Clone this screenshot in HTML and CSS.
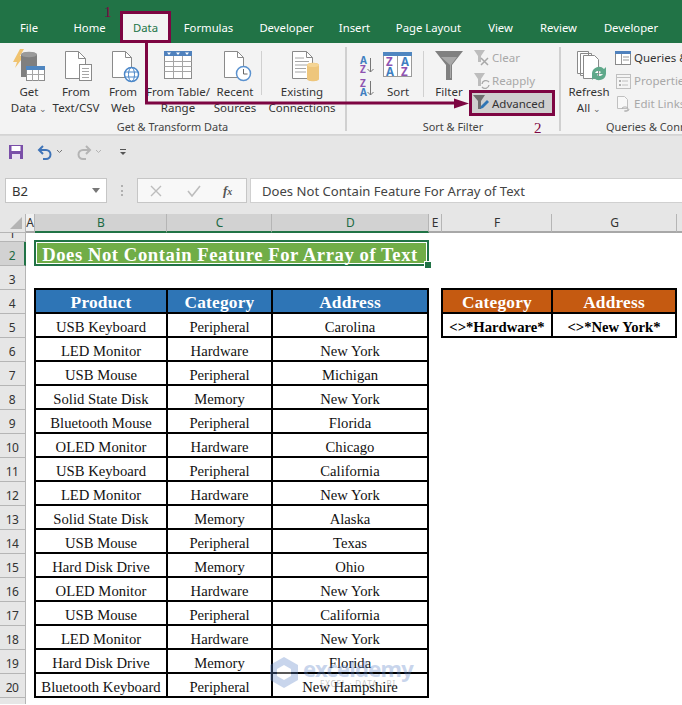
FILE: index.html
```html
<!DOCTYPE html>
<html lang="en">
<head>
<meta charset="utf-8">
<title>Does Not Contain Feature For Array of Text</title>
<link rel="stylesheet" href="styles.css">
</head>
<body>
<div class="app">
  <nav class="tabs">
    <div class="tab">File</div><div class="tab">Home</div><div class="tab tab-data">Data</div><div class="tab">Formulas</div><div class="tab">Developer</div><div class="tab">Insert</div><div class="tab">Page Layout</div><div class="tab">View</div><div class="tab">Review</div><div class="tab">Developer</div>
  </nav>

  <section class="ribbon">
    <div class="group g-get">
      <div class="group-body">
        <div class="big b-get">
          <svg class="ico" width="48" height="36" viewBox="5 47 48 36"><path d="M13 62 20 49h4l-4 7h4l-9 12 2-6z" fill="#f0c36f"/><path d="M21 55c0-4 16-4 16 0v22H21z" fill="#7f7f7f"/><ellipse cx="29" cy="54.500" rx="8" ry="2.800" fill="#9a9a9a"/><rect x="26.500" y="66.500" width="18" height="14" fill="#fff" stroke="#8c8c8c"/><rect x="26" y="66" width="19" height="4" fill="#4f86c0"/><path d="M26.500 74.500h18M32.500 70v11M38.500 70v11" stroke="#a6a6a6" fill="none"/></svg>
          <span>Get</span><span>Data <i class="chev">⌄</i></span>
        </div>
        <div class="big b-text">
          <svg class="ico" width="46" height="36" viewBox="53 47 46 36"><path d="M65.500 51.500h13l7 7v20h-20z" fill="#fff" stroke="#8a8a8a"/><path d="M78.500 51.500v7h7" fill="none" stroke="#8a8a8a"/><rect x="79.500" y="64.500" width="12" height="16" fill="#fff" stroke="#8a8a8a"/><path d="M82 68.500h7M82 71.500h7M82 74.500h7M82 77.500h7" stroke="#a6a6a6"/></svg>
          <span>From</span><span>Text/CSV</span>
        </div>
        <div class="big b-web">
          <svg class="ico" width="48" height="36" viewBox="99 47 48 36"><path d="M112.500 51.500h13l6 6v20h-19z" fill="#fff" stroke="#8a8a8a"/><path d="M125.500 51.500v6h6" fill="none" stroke="#8a8a8a"/><circle cx="131.500" cy="74.500" r="7" fill="#fff" stroke="#4a86c8" stroke-width="1.500"/><ellipse cx="131.500" cy="74.500" rx="3" ry="7" fill="none" stroke="#4a86c8"/><path d="M125 72h13M125 77h13" stroke="#4a86c8"/></svg>
          <span>From</span><span>Web</span>
        </div>
        <div class="big b-table">
          <svg class="ico" width="62" height="36" viewBox="147 47 62 36"><rect x="164.500" y="51.500" width="27" height="27" fill="#fff" stroke="#8c8c8c"/><rect x="164" y="51" width="28" height="5" fill="#4f81bd"/><path d="M167 52.500h4l-2 2.500zM176 52.500h4l-2 2.500zM185 52.500h4l-2 2.500z" fill="#fff"/><path d="M164.500 61.500h27M164.500 66.500h27M164.500 71.500h27M173.500 56v22M182.500 56v22" stroke="#a6a6a6"/></svg>
          <span>From Table/</span><span>Range</span>
        </div>
        <div class="big b-recent">
          <svg class="ico" width="52" height="36" viewBox="209 47 52 36"><path d="M224.500 51.500h13l6 6v20h-19z" fill="#fff" stroke="#8a8a8a"/><path d="M237.500 51.500v6h6" fill="none" stroke="#8a8a8a"/><circle cx="243.500" cy="73.500" r="7" fill="#fff" stroke="#5b92cf" stroke-width="1.500"/><path d="M243.500 69v5h4" fill="none" stroke="#666"/></svg>
          <span>Recent</span><span>Sources</span>
        </div>
        <div class="vsep"></div>
        <div class="big b-exist">
          <svg class="ico" width="78" height="36" viewBox="263 47 78 36"><path d="M292.500 51.500h14l6 6v21h-20z" fill="#fff" stroke="#8a8a8a"/><path d="M306.500 51.500v6h6" fill="none" stroke="#8a8a8a"/><path d="M295 58h9M295 61.500h14M295 65h14M295 68.500h11M295 72h11" stroke="#a6a6a6"/><path d="M307 65c0-3 12-3 12 0v14c0 3-12 3-12 0z" fill="#eec67c"/><ellipse cx="313" cy="65" rx="6" ry="2" fill="#f5d595"/></svg>
          <span>Existing</span><span>Connections</span>
        </div>
      </div>
      <div class="group-label">Get &amp; Transform Data</div>
    </div>

    <div class="gsep"></div>

    <div class="group g-sort">
      <div class="group-body">
        <div class="az-col">
          <svg width="24" height="20" viewBox="0 0 24 20"><text class="az blue" x="4" y="9">A</text><text class="az purple" x="4" y="18">Z</text><path d="M14.500 3v14M11.500 14l3 3 3-3" fill="none" stroke="#777"/></svg>
          <svg width="24" height="20" viewBox="0 0 24 20"><text class="az purple" x="4" y="9">Z</text><text class="az blue" x="4" y="18">A</text><path d="M14.500 3v14M11.500 14l3 3 3-3" fill="none" stroke="#777"/></svg>
        </div>
        <div class="big b-sort">
          <svg class="ico" width="38" height="36" viewBox="379 47 38 36"><rect x="383.500" y="53.500" width="28" height="23" fill="#fff" stroke="#9a9a9a"/><rect x="383" y="52" width="29" height="4" fill="#4f86c0"/><path d="M397.500 56v20" stroke="#9a9a9a"/><text class="az purple big-az" x="386" y="66">Z</text><text class="az blue big-az" x="386" y="76">A</text><text class="az blue big-az" x="401" y="66">A</text><text class="az purple big-az" x="401" y="76">Z</text></svg>
          <span>Sort</span>
        </div>
        <div class="vsep vsep-sort"></div>
        <div class="big b-filter">
          <svg class="ico" width="48" height="36" viewBox="425 47 48 36"><path d="M435 51h28l-11 14v15h-6V65z" fill="#808080"/><path d="M441 57h16l-6 8v13h-1V65z" fill="#a8a8a8"/></svg>
          <span>Filter</span>
        </div>
        <div class="small-col f-col">
          <div class="small muted">
            <svg width="18" height="18" viewBox="0 0 18 18"><path d="M1 1h11L8 7v6H5V7z" fill="#bdbdbd"/><path d="M8 9l7 7M15 9l-7 7" stroke="#a8a8a8" stroke-width="1.500"/></svg>
            <span>Clear</span>
          </div>
          <div class="small muted">
            <svg width="18" height="18" viewBox="0 0 18 18"><path d="M1 1h11L8 7v7H5V7z" fill="#bdbdbd"/><path d="M9 12a4 4 0 0 1 7-2M16 13a4 4 0 0 1-7 2" fill="none" stroke="#a8a8a8" stroke-width="1.300"/></svg>
            <span>Reapply</span>
          </div>
          <div class="small advanced">
            <svg width="18" height="18" viewBox="0 0 18 18"><path d="M0 1h12L8 7v8H5V7z" fill="#6f6f6f"/><path d="M7 15l1-3 6-6 2 2-6 6z" fill="#2f75b5"/></svg>
            <span>Advanced</span>
          </div>
        </div>
      </div>
      <div class="group-label s-label">Sort &amp; Filter</div>
    </div>

    <div class="gsep"></div>

    <div class="group g-query">
      <div class="group-body">
        <div class="big b-refresh">
          <svg class="ico" width="56" height="36" viewBox="561 47 56 36"><path d="M577.500 51.500h11v22h-11zM580.500 53.500h11v22h-11z" fill="#fff" stroke="#8a8a8a"/><path d="M583.500 55.500h11l4 4v19h-15z" fill="#fff" stroke="#8a8a8a"/><path d="M592 73a7 7 0 0 1 12-4l2-2v7h-7l2-2a4 4 0 0 0-6 1zM606 74a7 7 0 0 1-12 4l-2 2v-7h7l-2 2a4 4 0 0 0 6-1z" fill="#5fa88a"/></svg>
          <span>Refresh</span><span>All <i class="chev">⌄</i></span>
        </div>
        <div class="small-col q-col">
          <div class="small">
            <svg width="18" height="18" viewBox="0 0 18 18"><rect x=".5" y="2.500" width="15" height="13" fill="#fff" stroke="#8a8a8a"/><rect x="0" y="2" width="16" height="3" fill="#4f81bd"/><path d="M6.500 5v10M8 8h6M8 11h6" stroke="#999"/></svg>
            <span>Queries &amp; Connections</span>
          </div>
          <div class="small muted">
            <svg width="18" height="18" viewBox="0 0 18 18"><rect x="1.500" y="2.500" width="14" height="14" fill="#f5f5f5" stroke="#c0c0c0"/><path d="M1.500 5.500h14M7 9h6M7 13h6" stroke="#c0c0c0"/><rect x="4" y="8" width="2" height="2" fill="#b0b0b0"/><rect x="4" y="12" width="2" height="2" fill="#b0b0b0"/></svg>
            <span>Properties</span>
          </div>
          <div class="small muted">
            <svg width="18" height="18" viewBox="0 0 18 18"><path d="M2.500 1.500h7l3 3v9h-10z" fill="#f8f8f8" stroke="#c0c0c0"/><path d="M7 14a2 2 0 0 1 2-2h2a2 2 0 0 1 0 4H9M14 14a2 2 0 0 1-2 2h-2" fill="none" stroke="#b0b0b0"/></svg>
            <span>Edit Links</span>
          </div>
        </div>
      </div>
      <div class="group-label q-label">Queries &amp; Connections</div>
    </div>

    <svg class="arrow" width="682" height="135" viewBox="0 0 682 135"><path d="M146.500 40V103H458" fill="none" stroke="#7d0542" stroke-width="3"/><path d="M454 98.500 469 103.500 454 108.500z" fill="#7d0542"/></svg>
    <span class="mark mark-1">1</span>
    <span class="mark mark-2">2</span>
  </section>

  <div class="qat">
    <svg width="16" height="16" viewBox="0 0 16 16"><path d="M1 1h14v14H1z" fill="#7a4fa8"/><rect x="3.500" y="2" width="9" height="5" fill="#fff"/><rect x="4" y="10" width="8" height="5" fill="#e8e0f0"/></svg>
    <svg class="q-undo" width="16" height="16" viewBox="0 0 16 16"><path d="M6 2 2 6l4 4" fill="none" stroke="#3f74b8" stroke-width="2"/><path d="M2 6h7a4.500 4.500 0 0 1 0 9H6" fill="none" stroke="#3f74b8" stroke-width="2"/></svg>
    <svg class="q-chev" width="7" height="5" viewBox="0 0 7 5"><path d="M1 1l2.500 2.500L6 1" fill="none" stroke="#777"/></svg>
    <svg class="q-redo" width="16" height="16" viewBox="0 0 16 16"><path d="M10 2l4 4-4 4" fill="none" stroke="#b4b4b4" stroke-width="2"/><path d="M14 6H7a4.500 4.500 0 0 0 0 9h3" fill="none" stroke="#b4b4b4" stroke-width="2"/></svg>
    <svg class="q-chev" width="7" height="5" viewBox="0 0 7 5"><path d="M1 1l2.500 2.500L6 1" fill="none" stroke="#b4b4b4"/></svg>
    <svg class="q-more" width="8" height="8" viewBox="0 0 8 8"><path d="M1 1.500h6" stroke="#555"/><path d="M1 4h6L4 7z" fill="#555"/></svg>
  </div>

  <div class="formula">
    <div class="namebox"><span>B2</span><i class="tri"></i></div>
    <div class="grip"></div>
    <div class="fxbox">
      <svg width="12" height="12" viewBox="0 0 12 12"><path d="M1 1l10 10M11 1 1 11" stroke="#bdbdbd" stroke-width="1.400"/></svg>
      <svg width="14" height="12" viewBox="0 0 14 12"><path d="M1 6l4 5 8-10" fill="none" stroke="#bdbdbd" stroke-width="1.600"/></svg>
      <span class="fx">f<small>x</small></span>
    </div>
    <div class="input">Does Not Contain Feature For Array of Text</div>
  </div>

  <div class="cols">
    <div class="col c-corner"><i class="corner"></i></div>
    <div class="col c-a">A</div>
    <div class="col c-b sel">B</div>
    <div class="col c-c sel">C</div>
    <div class="col c-d sel">D</div>
    <div class="col c-e">E</div>
    <div class="col c-f">F</div>
    <div class="col c-g">G</div>
    <div class="col c-h"></div>
  </div>

  <div class="main">
    <div class="rows">
      <div class="rn rn-1">1</div><div class="rn rn-sel">2</div><div class="rn">3</div><div class="rn">4</div><div class="rn">5</div><div class="rn">6</div><div class="rn">7</div><div class="rn">8</div><div class="rn">9</div><div class="rn">10</div><div class="rn">11</div><div class="rn">12</div><div class="rn">13</div><div class="rn">14</div><div class="rn">15</div><div class="rn">16</div><div class="rn">17</div><div class="rn">18</div><div class="rn">19</div><div class="rn">20</div><div class="rn">21</div>
    </div>
    <div class="sheet">
      <h1 class="title">Does Not Contain Feature For Array of Text<i class="handle"></i></h1>
      <div class="tables">
        <div class="tbl tbl-data">
          <div class="th">Product</div><div class="th">Category</div><div class="th">Address</div>
          <div>USB Keyboard</div><div>Peripheral</div><div>Carolina</div>
          <div>LED Monitor</div><div>Hardware</div><div>New York</div>
          <div>USB Mouse</div><div>Peripheral</div><div>Michigan</div>
          <div>Solid State Disk</div><div>Memory</div><div>New York</div>
          <div>Bluetooth Mouse</div><div>Peripheral</div><div>Florida</div>
          <div>OLED Monitor</div><div>Hardware</div><div>Chicago</div>
          <div>USB Keyboard</div><div>Peripheral</div><div>California</div>
          <div>LED Monitor</div><div>Hardware</div><div>New York</div>
          <div>Solid State Disk</div><div>Memory</div><div>Alaska</div>
          <div>USB Mouse</div><div>Peripheral</div><div>Texas</div>
          <div>Hard Disk Drive</div><div>Memory</div><div>Ohio</div>
          <div>OLED Monitor</div><div>Hardware</div><div>New York</div>
          <div>USB Mouse</div><div>Peripheral</div><div>California</div>
          <div>LED Monitor</div><div>Hardware</div><div>New York</div>
          <div>Hard Disk Drive</div><div>Memory</div><div>Florida</div>
          <div>Bluetooth Keyboard</div><div>Peripheral</div><div>New Hampshire</div>
        </div>
        <div class="tbl tbl-crit">
          <div class="th">Category</div><div class="th">Address</div>
          <div class="crit">&lt;&gt;*Hardware*</div><div class="crit">&lt;&gt;*New York*</div>
        </div>
      </div>
      <div class="watermark">
        <svg width="28" height="31" viewBox="0 0 28 31"><path d="M14 0 28 8v15l-14 8-14-8V8z" fill="#5f86c8"/><path d="M14 8l7 4v7l-7 4-7-4v-7z" fill="#fff"/></svg>
        <div class="wm-text"><b>exceldemy</b><small>EXCEL · DATA · BI</small></div>
      </div>
    </div>
  </div>
</div>
</body>
</html>
```

FILE: styles.css
```css
* { box-sizing: border-box; }
html, body { margin: 0; padding: 0; height: 100%; overflow: hidden; background: #fff; }
body { font-family: "Noto Sans", "Open Sans", sans-serif; font-size: 12px; color: #333; }
.app { width: 682px; height: 705px; overflow: hidden; position: relative; }

/* tabs */
.tabs {
  height: 43px; background: #217346; padding-top: 14px; color: #fff; font-size: 11.300px;
  display: grid; grid-template-columns: 58px 63px 49px 77px 79px 57px 91px 53px 63px 82px;
}
.tab { height: 26px; line-height: 28px; text-align: center; white-space: nowrap; }
.tab-data { background: #f3f3f3; color: #217346; margin: 0 2px; outline: 3px solid #7d0542; }

/* ribbon */
.ribbon { position: relative; height: 92px; background: #f3f3f3; display: flex; border-bottom: 1px solid #d4d4d4; }
.group { display: flex; flex-direction: column; flex: 0 0 auto; }
.group-body { display: flex; height: 77px; padding-top: 4px; }
.group-label { text-align: center; font-size: 10.900px; line-height: 14px; color: #444; white-space: nowrap; margin-left: -5px; }
.g-get { width: 345px; padding-left: 5px; }
.g-sort { width: 212px; padding-left: 7px; }
.g-query { width: 121px; }
.gsep { width: 2px; height: 84px; margin-top: 4px; background: #d0d0d0; flex: 0 0 auto; }
.big { display: flex; flex-direction: column; align-items: center; flex: 0 0 auto; color: #333; line-height: 16px; white-space: nowrap; font-size: 11.500px; }
.big .ico { display: block; margin-bottom: 1px; flex: 0 0 auto; }
.b-get { width: 48px; } .b-text { width: 46px; } .b-web { width: 48px; }
.b-table { width: 62px; } .b-recent { width: 52px; } .b-exist { width: 78px; }
.b-sort { width: 38px; margin-left: -1px; }
.b-filter { width: 48px; }
.b-refresh { width: 56px; }
.vsep { width: 1px; height: 44px; margin: 4px 1px 0 0; background: #d0d0d0; flex: 0 0 auto; }
.vsep-sort { margin: 4px 1px 0 6px; height: 46px; }
.chev { font-style: normal; font-size: 9px; color: #666; }
.az-col { width: 24px; padding-top: 8px; margin-left: 2px; display: flex; flex-direction: column; gap: 3px; flex: 0 0 auto; }
.az { font: 700 10px "Noto Sans", sans-serif; }
.big-az { font-size: 11.500px; }
.blue { fill: #3f7fc1; }
.purple { fill: #8e52b0; }
.small-col { display: flex; flex-direction: column; margin-top: -1px; flex: 0 0 auto; }
.f-col { margin-left: -1px; }
.q-col { margin-left: -2px; }
.small { display: flex; align-items: center; gap: 1px; height: 23px; white-space: nowrap; font-size: 11.500px; color: #333; }
.small svg { flex: 0 0 auto; }
.f-col .small { padding-left: 1px; }
.muted { color: #a8a8a8; }
.advanced { height: 20px; width: 80px; margin-top: 1px; background: #cfcfcf; outline: 3px solid #7d0542; }
.s-label { margin-left: -7px; }
.q-label { margin-left: 45px; text-align: left; }
.arrow { position: absolute; left: 0; top: -43px; pointer-events: none; }
.mark { position: absolute; font: 15px/16px "Liberation Serif", serif; color: #7d0542; }
.mark-1 { left: 104px; top: -39px; }
.mark-2 { left: 534px; top: 77px; }

/* quick access */
.qat { height: 34px; background: #e6e6e6; display: flex; align-items: center; padding: 0 0 2px 8px; border-top: 1px solid #d8d8d8; }
.q-undo { margin-left: 13px; }
.q-chev { margin-left: 3px; }
.q-redo { margin-left: 13px; }
.q-more { margin-left: 17px; }

/* formula bar */
.formula { height: 45px; background: #e6e6e6; display: flex; align-items: flex-start; padding: 9px 0 0 5px; font-size: 13.100px; }
.namebox { width: 102px; height: 25px; background: #fff; border: 1px solid #c6c6c6; display: flex; align-items: center; justify-content: space-between; padding: 0 6px; }
.tri { width: 0; height: 0; border: 4px solid transparent; border-top: 5px solid #777; border-bottom: 0; }
.grip { width: 2px; height: 11px; margin: 7px 14px 0 14px; border-left: 2px dotted #b0b0b0; }
.fxbox { width: 110px; height: 25px; background: #f8f8f8; border: 1px solid #c6c6c6; display: flex; align-items: center; padding-left: 12px; gap: 25px; }
.fx { font: italic 700 13px "Liberation Serif", serif; color: #555; margin-left: -3px; }
.fx small { font-size: 10px; }
.input { flex: 1; height: 25px; margin-left: 3px; background: #fff; border: 1px solid #d0d0d0; border-right: 0; line-height: 24px; padding-left: 11px; white-space: nowrap; color: #444; }

/* column headers */
.cols { height: 19px; display: flex; background: #e6e6e6; }
.col { flex: 0 0 auto; height: 19px; line-height: 17px; padding-left: 1px; text-align: center; border-right: 1px solid #b5b5b5; border-bottom: 2px solid #a8a8a8; font-size: 12px; color: #333; }
.c-corner { width: 26px; position: relative; border-bottom: 1px solid #b5b5b5; }
.corner { position: absolute; right: 3px; bottom: 3px; border: 6px solid transparent; border-right-color: #b4b4b4; border-bottom-color: #b4b4b4; }
.c-a { width: 9px; padding: 0; background: #f0f0f0; }
.c-b { width: 132px; } .c-c { width: 105px; } .c-d { width: 157px; }
.c-e { width: 13px; padding: 0; } .c-f { width: 110px; } .c-g { width: 125px; }
.c-h { flex: 1; border-right: 0; }
.sel { background: #d2d2d2; border-bottom-color: #217346; color: #1d6a44; }

/* main */
.main { display: flex; height: 471px; background: #fff; }
.rows { width: 26px; flex: 0 0 auto; background: #e6e6e6; border-right: 1px solid #b5b5b5; }
.rn { height: 24px; line-height: 28px; padding-right: 1px; text-align: center; font-size: 12px; letter-spacing: -.5px; color: #333; border-bottom: 1px solid #b5b5b5; overflow: hidden; }
.rn-1 { height: 9px; line-height: 2px; }
.rn-sel { background: #d2d2d2; border-right: 2px solid #217346; margin-right: -1px; color: #1d6a44; padding-right: 0; }
.sheet { position: relative; flex: 1; padding: 7px 0 0 8px; min-width: 0; }

.title {
  position: relative; margin: 0; width: 395px; height: 26px; padding-right: 3px; background: #70ad47; color: #fff;
  border: 2px solid #217346; outline: 1px solid #fff; outline-offset: -3px;
  font: 700 18.670px/25px "Liberation Serif", serif; letter-spacing: .56px; text-align: center; white-space: nowrap;
}
.handle { position: absolute; right: -4px; bottom: -4px; width: 6px; height: 6px; background: #217346; outline: 1px solid #fff; }

.tables { display: flex; gap: 12px; margin-top: 22px; align-items: flex-start; }
.tbl { display: grid; gap: 2px; padding: 2px; background: #000; grid-auto-rows: 22px; font: 14.670px/26px "Liberation Serif", serif; color: #111; }
.tbl > div { background: #fff; text-align: center; white-space: nowrap; }
.tbl-data { grid-template-columns: 130px 103px 154px; width: 395px; }
.tbl-crit { grid-template-columns: 108px 122px; width: 236px; }
.tbl > .th { background: #2e75b6; color: #fff; font-weight: 700; font-size: 17.330px; letter-spacing: .2px; line-height: 26px; }
.tbl-crit > .th { background: #c55a11; }
.tbl > .crit { font-weight: 700; color: #000; line-height: 26px; }

.watermark { position: absolute; left: 244px; top: 424px; display: flex; gap: 5px; opacity: .34; pointer-events: none; }
.wm-text { display: flex; flex-direction: column; align-items: center; width: 110px; }
.wm-text b { font: 700 22px/23px "Noto Sans", sans-serif; color: #5f86c8; letter-spacing: -.8px; }
.wm-text small { font: 8px/8px "Noto Sans", sans-serif; color: #555; letter-spacing: .8px; }
```
